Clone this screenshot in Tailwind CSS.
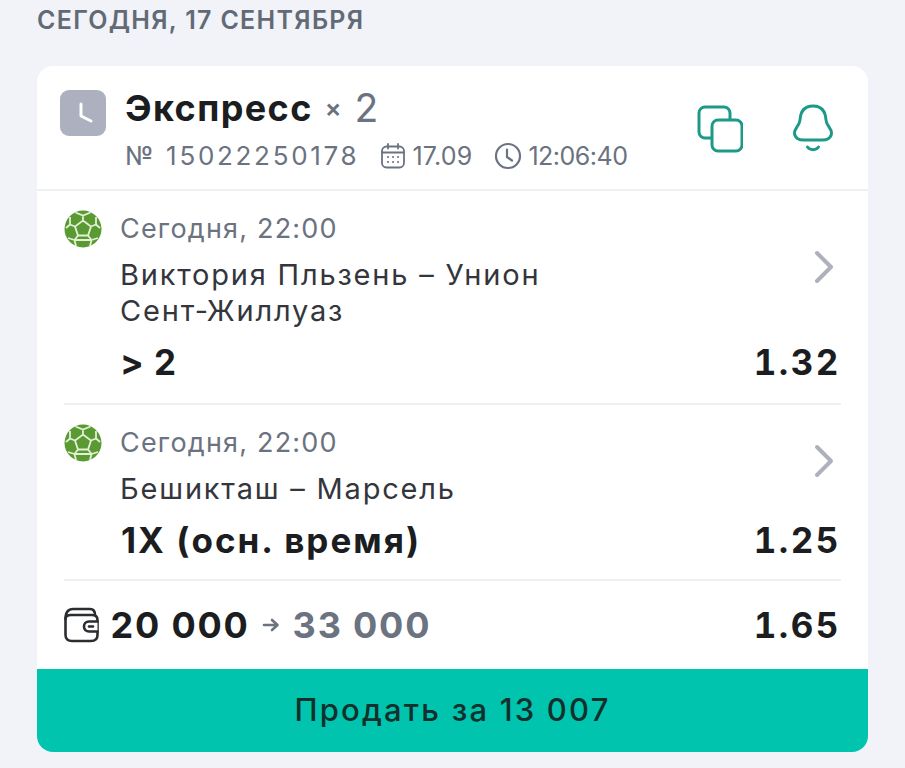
<!DOCTYPE html>
<html lang="ru">
  <head>
    <meta charset="UTF-8" />
    <meta name="viewport" content="width=device-width, initial-scale=1.0" />
    <script src="https://cdn.jsdelivr.net/npm/@tailwindcss/browser@4"></script>
    <title>Экспресс</title>
  </head>
  <body>
    <div class="h-[768px] w-[905px] overflow-hidden bg-[#f1f3f8] px-[37px] font-['Inter',sans-serif] text-[#1d1f24]">
      <h2 class="h-[66px] pt-[6px] text-[25px] leading-[28px] font-semibold tracking-[1.3px] whitespace-nowrap text-[#626a76]">СЕГОДНЯ, 17 СЕНТЯБРЯ</h2>

      <div class="flex h-[686px] w-[831px] flex-col overflow-hidden rounded-[16px] bg-white">
        <!-- header -->
        <div class="flex h-[125px] shrink-0 border-b-2 border-[#eef0f3] pt-[24px] pr-[35px] pl-[23px]">
          <div class="flex h-[46px] w-[46px] shrink-0 items-center justify-center rounded-[9px] bg-[#acb0bf]">
            <svg width="46" height="46" viewBox="0 0 46 46" fill="none"><path d="M21 14V26L31 31" stroke="#fff" stroke-width="3" stroke-linecap="round" stroke-linejoin="round"/></svg>
          </div>
          <div class="-mt-[2px] ml-[19px] flex-1">
            <div class="flex h-[40px] items-center">
              <span class="text-[36px] leading-[40px] font-bold tracking-[1.4px] text-[#1b1d21]">Экспресс</span>
              <span class="ml-[12px] text-[25px] leading-[40px] font-semibold text-[#6b7280]">×</span>
              <span class="ml-[13px] text-[39px] leading-[40px] text-[#6b7280]">2</span>
            </div>
            <div class="mt-[13px] flex h-[30px] items-center text-[25px] leading-[30px] whitespace-nowrap text-[#6b7280]">
              <span class="text-[26px] tracking-[2.7px]">№ 15022250178</span>
              <svg class="ml-[21px]" width="26" height="28" viewBox="0 0 26 28" fill="none" stroke="#6b7280" stroke-width="1.8" stroke-linecap="round"><rect x="2" y="4.5" width="22" height="21" rx="4.5"/><path d="M2 10.5H24M8 2V6.5M18 2V6.5"/><path d="M8 15H8.1M13 15H13.1M18 15H18.1M8 20H8.1M13 20H13.1M18 20H18.1" stroke-width="2"/></svg>
              <span class="ml-[6px] tracking-[0.2px]">17.09</span>
              <svg class="ml-[22px]" width="28" height="28" viewBox="0 0 28 28" fill="none" stroke="#6b7280" stroke-width="2.2" stroke-linecap="round" stroke-linejoin="round"><circle cx="14" cy="14" r="12"/><path d="M13 7.5V15L18 18.5"/></svg>
              <span class="ml-[6px] tracking-[-0.5px]">12:06:40</span>
            </div>
          </div>
          <div class="mt-[15px] flex h-[46px] items-center gap-[50px] pt-[2px]">
            <svg width="46" height="48" viewBox="0 0 46 48" fill="none" stroke="#1c9a87" stroke-width="3"><rect x="2" y="2" width="31" height="31" rx="6"/><rect x="15" y="15" width="30" height="31" rx="6" fill="#fff"/></svg>
            <svg width="40" height="50" viewBox="0 0 40 50" fill="none" stroke="#1c9a87" stroke-width="3" stroke-linecap="round" stroke-linejoin="round"><path d="M20 2C29 2 32.5 8 33 16C33.5 22 38.5 24 38.5 29C38.5 34 34 36 29 36H11C6 36 1.5 34 1.5 29C1.5 24 6.5 22 7 16C7.5 8 11 2 20 2Z"/><path d="M14.5 43C17 46.5 23 46.5 25.5 43"/></svg>
          </div>
        </div>

        <!-- first bet -->
        <div class="mx-[27px] h-[214px] shrink-0 border-b-2 border-[#eef0f3] pt-[19px]">
          <div class="flex h-[38px] items-center">
            <svg width="38" height="38" viewBox="0 0 38 38"><circle cx="19" cy="19" r="18.5" fill="#5a9a32"/><path d="M19 10.5L27 16.5L24 25.500H14L11 16.5ZM19 10.5V5.500M27 16.5L32 14.500M24 25.500L27.500 30M14 25.500L10.500 30M11 16.5L6 14.500M11.500 2.500L19 5.500L26.500 2.500M32 14.500L36 18M32 14.500L32 7M6 14.500L2 18M6 14.500L6 7M27.500 30L34 28M27.500 30L26 36M10.500 30L4 28M10.500 30L12 36M10.500 30H27.500" fill="none" stroke="#e3efd6" stroke-width="1.8"/></svg>
            <span class="ml-[18px] text-[27px] leading-[38px] tracking-[1.2px] text-[#6b7280]">Сегодня, 22:00</span>
          </div>
          <div class="flex items-start justify-between pt-[9px] pl-[56px]">
            <div class="text-[29px] leading-[36px] tracking-[1.8px] whitespace-nowrap text-[#33363c]">Виктория Пльзень – Унион<br />Сент-Жиллуаз</div>
            <svg class="-mt-[7px] mr-[7px]" width="20" height="34" viewBox="0 0 20 34" fill="none" stroke="#aeb1bb" stroke-width="4" stroke-linecap="round" stroke-linejoin="round"><path d="M3 3L17 17L3 31"/></svg>
          </div>
          <div class="flex items-center justify-between pt-[13px] pl-[56px]">
            <span class="text-[35px] leading-[40px] font-bold tracking-[1px] text-[#1b1d21]">&gt; 2</span>
            <span class="text-[35px] leading-[40px] font-bold tracking-[2.500px] text-[#1b1d21] tabular-nums">1.32</span>
          </div>
        </div>

        <!-- second bet -->
        <div class="mx-[27px] h-[176px] shrink-0 border-b-2 border-[#eef0f3] pt-[19px]">
          <div class="flex h-[38px] items-center">
            <svg width="38" height="38" viewBox="0 0 38 38"><circle cx="19" cy="19" r="18.5" fill="#5a9a32"/><path d="M19 10.5L27 16.5L24 25.500H14L11 16.5ZM19 10.5V5.500M27 16.5L32 14.500M24 25.500L27.500 30M14 25.500L10.500 30M11 16.5L6 14.500M11.500 2.500L19 5.500L26.500 2.500M32 14.500L36 18M32 14.500L32 7M6 14.500L2 18M6 14.500L6 7M27.500 30L34 28M27.500 30L26 36M10.500 30L4 28M10.500 30L12 36M10.500 30H27.500" fill="none" stroke="#e3efd6" stroke-width="1.8"/></svg>
            <span class="ml-[18px] text-[27px] leading-[38px] tracking-[1.2px] text-[#6b7280]">Сегодня, 22:00</span>
          </div>
          <div class="flex items-start justify-between pt-[9px] pl-[56px]">
            <div class="text-[29px] leading-[36px] tracking-[1.8px] whitespace-nowrap text-[#33363c]">Бешикташ – Марсель</div>
            <svg class="-mt-[27px] mr-[7px]" width="20" height="34" viewBox="0 0 20 34" fill="none" stroke="#aeb1bb" stroke-width="4" stroke-linecap="round" stroke-linejoin="round"><path d="M3 3L17 17L3 31"/></svg>
          </div>
          <div class="flex items-center justify-between pt-[13px] pl-[57px]">
            <span class="text-[35px] leading-[40px] font-bold tracking-[2px] text-[#1b1d21]">1X (осн. время)</span>
            <span class="text-[35px] leading-[40px] font-bold tracking-[2.500px] text-[#1b1d21] tabular-nums">1.25</span>
          </div>
        </div>

        <!-- total -->
        <div class="mx-[27px] flex flex-1 items-center justify-between">
          <div class="flex items-center">
            <svg class="-ml-[0.5px]" width="36" height="36" viewBox="0 0 36 36" fill="none" stroke="#2b2d31" stroke-width="2.6" stroke-linecap="round" stroke-linejoin="round"><path d="M1.5 12C1.5 5 4.5 2 9 2H26C29.500 2 31 4 31 8"/><path d="M1.5 12C1.5 9 4 8 7 8H28C31.500 8 33.500 10 33.500 13V28C33.500 32 31 34 27 34H8C4 34 1.500 32 1.500 28Z"/><path d="M33.500 14.500H25C22 14.500 20 16.500 20 19.500C20 22.500 22 24.500 25 24.500H33.500" fill="#fff"/><path d="M25 19.500H29"/></svg>
            <span class="ml-[11px] text-[36px] leading-[44px] font-bold tracking-[1.8px] whitespace-nowrap text-[#1b1d21]">20 000</span>
            <svg class="ml-[12px]" width="18" height="16" viewBox="0 0 18 16" fill="none" stroke="#6b7280" stroke-width="2.6" stroke-linecap="round" stroke-linejoin="round"><path d="M2 8H15M10 3L15.500 8L10 13"/></svg>
            <span class="ml-[13px] text-[36px] leading-[44px] font-bold tracking-[1.8px] whitespace-nowrap text-[#6b7280]">33 000</span>
          </div>
          <span class="text-[35px] leading-[40px] font-bold tracking-[2.500px] text-[#1b1d21] tabular-nums">1.65</span>
        </div>

        <!-- sell -->
        <button class="h-[83px] w-full shrink-0 bg-[#00c4ae] text-[31px] font-medium tracking-[2.2px] text-[#13302d]">Продать за 13 007</button>
      </div>
    </div>
  </body>
</html>
